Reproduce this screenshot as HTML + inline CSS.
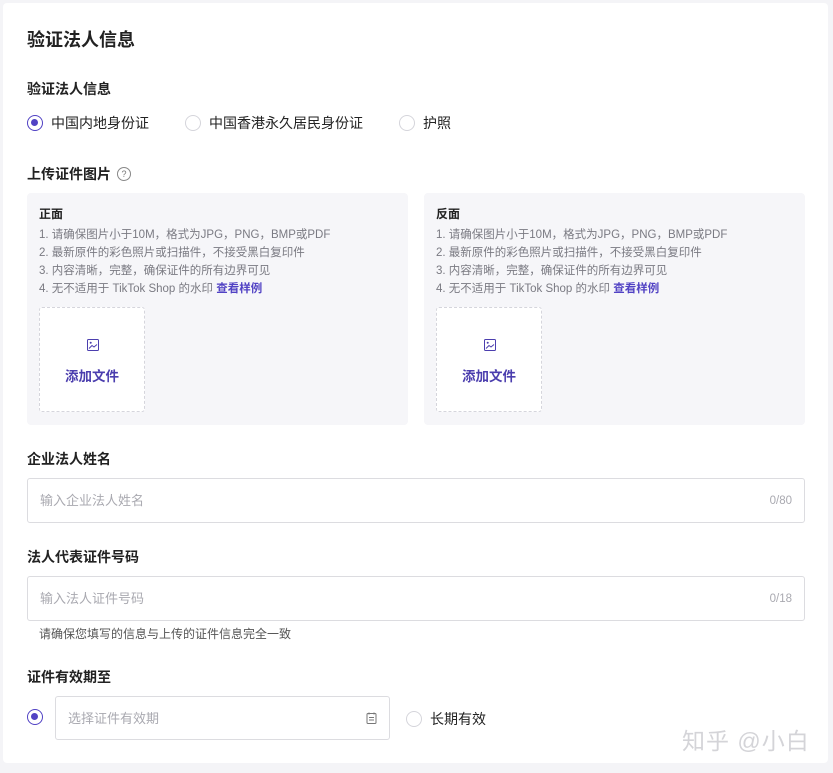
<!DOCTYPE html>
<html><head><meta charset="utf-8"><style>
*{margin:0;padding:0;box-sizing:border-box}
body{width:833px;height:773px;background:#f4f4f7;font-family:"Liberation Sans","Noto Sans CJK SC",sans-serif;position:relative;overflow:hidden;color:#222}
.card{position:absolute;left:3px;top:3px;width:825px;height:760px;background:#fff;border-radius:4px}
.a{position:absolute;white-space:nowrap}
.lbl{font-size:14px;font-weight:bold;color:#222;line-height:18px}
.radio{position:absolute;width:16px;height:16px;border:1px solid #d5d5db;border-radius:50%;background:#fff}
.radio.on{border:1.5px solid #5142c4}
.radio.on:after{content:"";position:absolute;left:3px;top:3px;width:7px;height:7px;border-radius:50%;background:#5142c4}
.rt{font-size:14px;line-height:18px;color:#222}
.panel{position:absolute;top:193px;width:381px;height:232px;background:#f6f6f9;border-radius:4px}
.ph{position:absolute;left:12px;top:12px;font-size:12px;font-weight:bold;color:#222}
.pl{position:absolute;left:12px;top:33px;font-size:11.5px;line-height:18px;color:#7a7a82}
.pl b{color:#5142c4}
.up{position:absolute;left:12px;top:114px;width:106px;height:105px;background:#fff;border:1px dashed #d5d5dc;border-radius:3px}
.up svg{position:absolute;left:47px;top:31px}
.up span{position:absolute;left:0;right:0;top:57px;text-align:center;font-size:13.5px;font-weight:bold;color:#4b3eae}
.inp{position:absolute;border:1px solid #dcdce0;border-radius:3px;background:#fff}
.phd{position:absolute;left:12px;font-size:13px;color:#a9a9b0}
.cnt{position:absolute;right:12px;font-size:11.5px;color:#a9a9b0}
</style></head><body>
<div class="card"></div>
<div class="a" style="left:27px;top:29px;font-size:18px;font-weight:bold;line-height:22px">验证法人信息</div>
<div class="a lbl" style="left:27px;top:80px">验证法人信息</div>
<div class="radio on" style="left:27px;top:115px"></div><div class="a rt" style="left:51px;top:114px">中国内地身份证</div>
<div class="radio" style="left:185px;top:115px"></div><div class="a rt" style="left:209px;top:114px">中国香港永久居民身份证</div>
<div class="radio" style="left:399px;top:115px"></div><div class="a rt" style="left:423px;top:114px">护照</div>
<div class="a lbl" style="left:27px;top:165px">上传证件图片</div>
<div class="a" style="left:117px;top:167px;width:14px;height:14px;border:1px solid #888;border-radius:50%;font-size:9px;text-align:center;line-height:12px;color:#777">?</div>

<div class="panel" style="left:27px">
<div class="ph">正面</div>
<div class="pl">1. 请确保图片小于10M，格式为JPG，PNG，BMP或PDF<br>2. 最新原件的彩色照片或扫描件，不接受黑白复印件<br>3. 内容清晰，完整，确保证件的所有边界可见<br>4. 无不适用于 TikTok Shop 的水印 <b>查看样例</b></div>
<div class="up"><svg width="12" height="12" viewBox="0 0 12 12"><rect x="0.5" y="0.5" width="11" height="11" rx="1" fill="none" stroke="#4b3eae"/><circle cx="3.7" cy="3.7" r="1" fill="#4b3eae"/><path d="M2 9.5 L5 6.5 L7 8 L10 5.5" fill="none" stroke="#4b3eae"/></svg><span>添加文件</span></div>
</div>
<div class="panel" style="left:424px">
<div class="ph">反面</div>
<div class="pl">1. 请确保图片小于10M，格式为JPG，PNG，BMP或PDF<br>2. 最新原件的彩色照片或扫描件，不接受黑白复印件<br>3. 内容清晰，完整，确保证件的所有边界可见<br>4. 无不适用于 TikTok Shop 的水印 <b>查看样例</b></div>
<div class="up"><svg width="12" height="12" viewBox="0 0 12 12"><rect x="0.5" y="0.5" width="11" height="11" rx="1" fill="none" stroke="#4b3eae"/><circle cx="3.7" cy="3.7" r="1" fill="#4b3eae"/><path d="M2 9.5 L5 6.5 L7 8 L10 5.5" fill="none" stroke="#4b3eae"/></svg><span>添加文件</span></div>
</div>

<div class="a lbl" style="left:27px;top:450px">企业法人姓名</div>
<div class="inp" style="left:27px;top:478px;width:778px;height:45px"><div class="phd" style="top:11px">输入企业法人姓名</div><div class="cnt" style="top:16px">0/80</div></div>
<div class="a lbl" style="left:27px;top:548px">法人代表证件号码</div>
<div class="inp" style="left:27px;top:576px;width:778px;height:45px"><div class="phd" style="top:11px">输入法人证件号码</div><div class="cnt" style="top:16px">0/18</div></div>
<div class="a" style="left:39px;top:625px;font-size:12px;color:#555">请确保您填写的信息与上传的证件信息完全一致</div>
<div class="a lbl" style="left:27px;top:668px">证件有效期至</div>
<div class="radio on" style="left:27px;top:709px"></div>
<div class="inp" style="left:55px;top:696px;width:335px;height:44px"><div class="phd" style="top:11px">选择证件有效期</div>
<svg style="position:absolute;left:310px;top:15px" width="11" height="12" viewBox="0 0 11 12"><rect x="1" y="1.5" width="9" height="10" rx="1" fill="none" stroke="#777"/><path d="M3 0.5v2M8 0.5v2M3 5.5h5M3 8h5" stroke="#777"/></svg></div>
<div class="radio" style="left:406px;top:711px"></div><div class="a rt" style="left:430px;top:710px">长期有效</div>
<div class="a" style="left:682px;top:722px;font-size:23px;color:#d4d4d8;letter-spacing:1px">知乎 @小白</div>
</body></html>
